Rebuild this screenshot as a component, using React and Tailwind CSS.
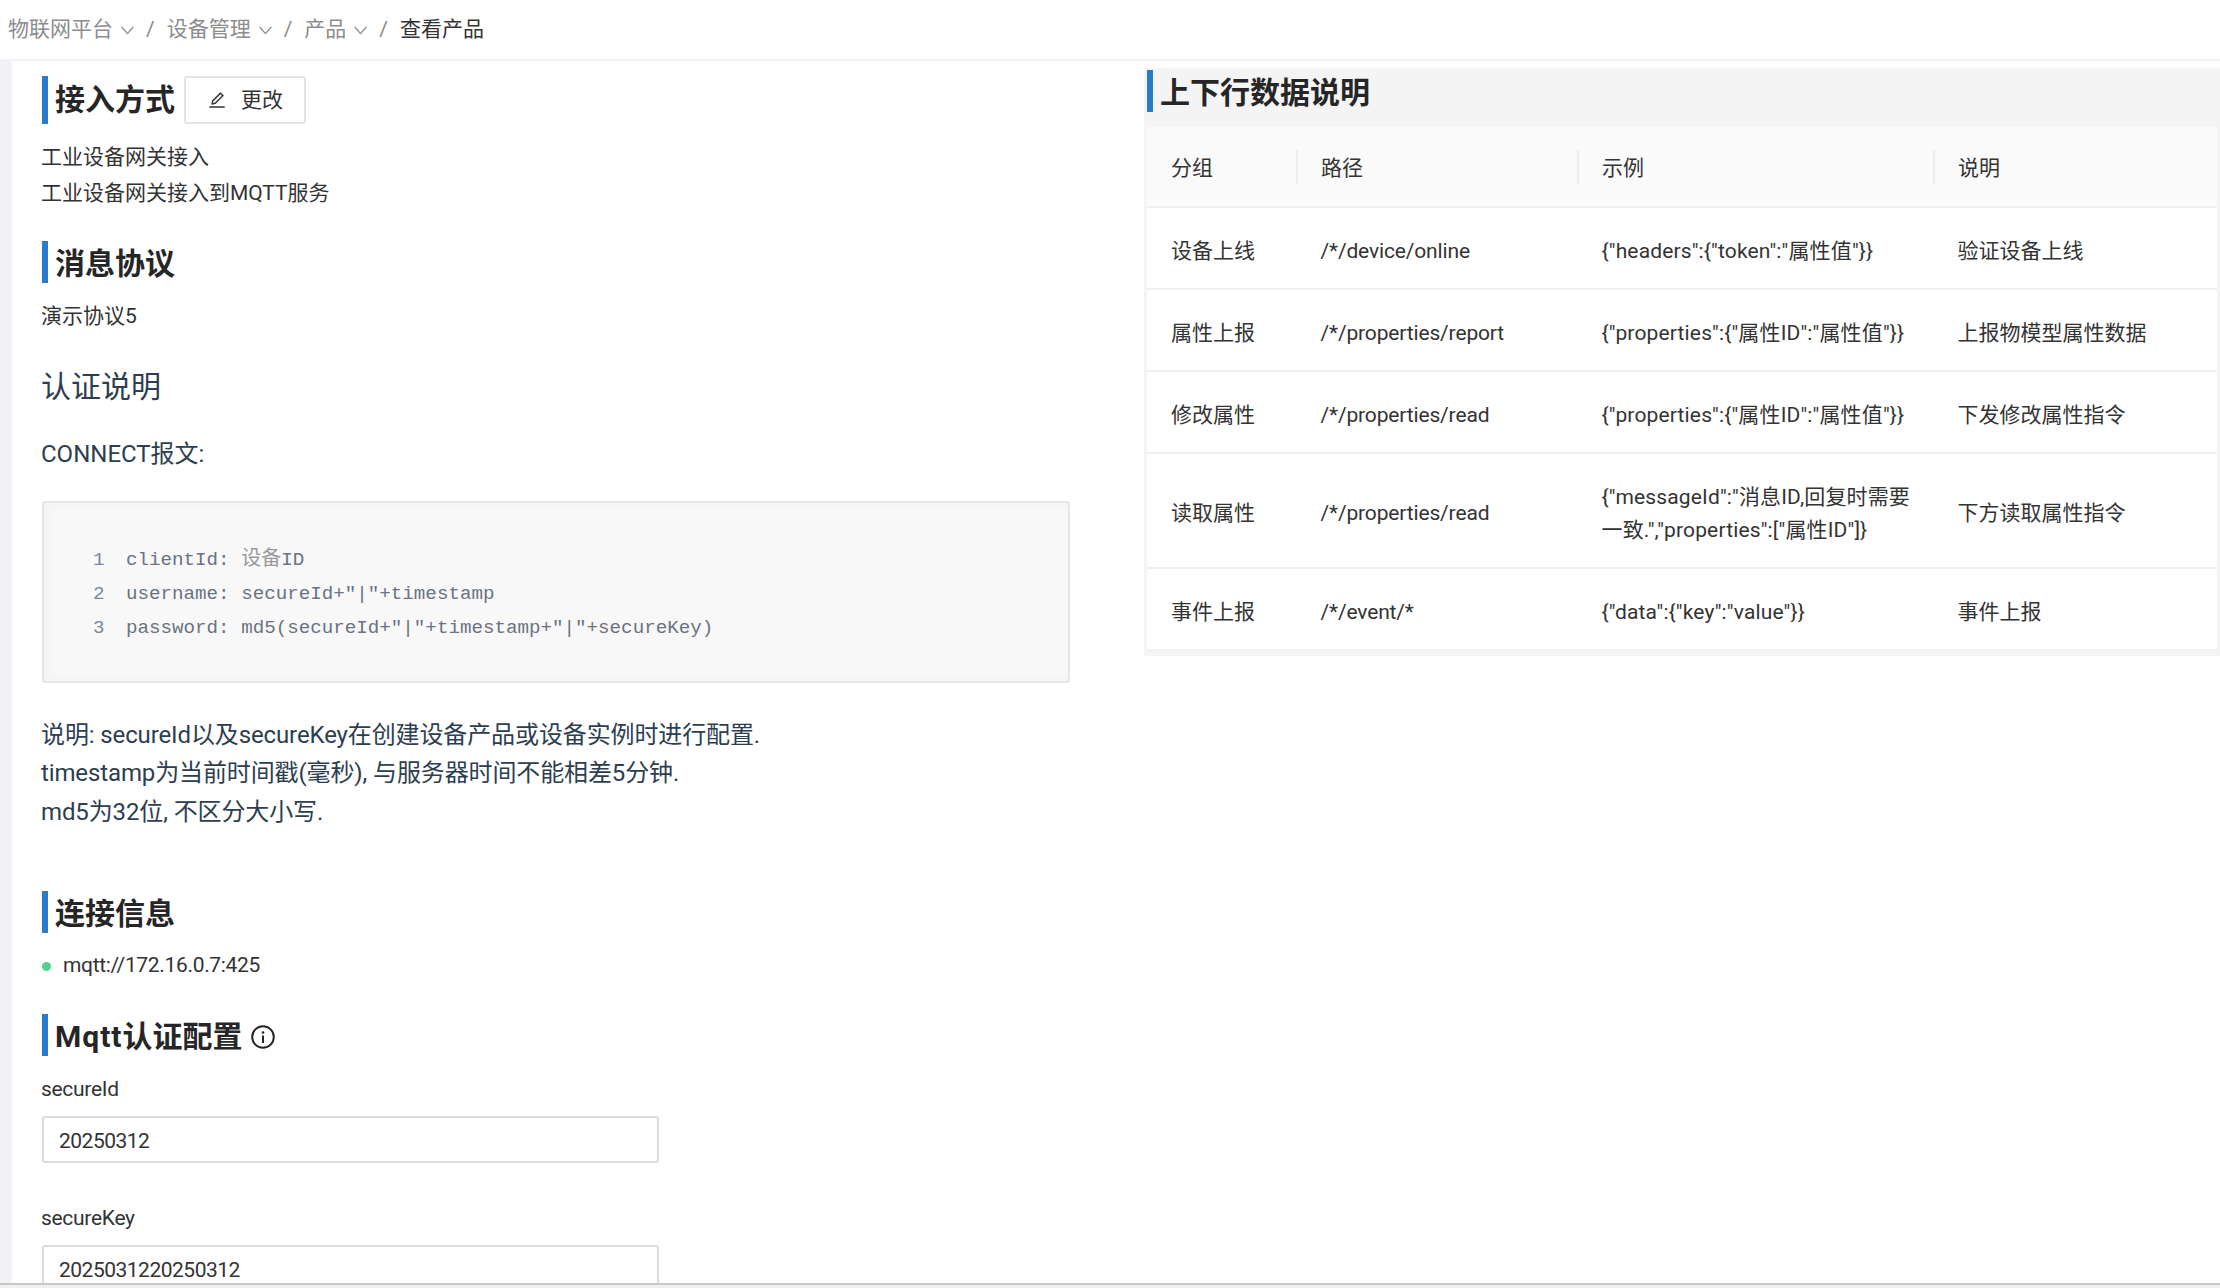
import React from "react";
import { AiOutlineEdit } from "react-icons/ai";

const FONT = "font-['Roboto','Noto_Sans_CJK_SC',sans-serif]";

function Chevron() {
  return (
    <svg width="13" height="9" viewBox="0 0 13 9" fill="none" className="ml-[8px] mt-[2px] shrink-0">
      <polyline points="0.7,1 6.5,7.6 12.3,1" stroke="#8c8c8c" strokeWidth="1.3" />
    </svg>
  );
}

function Crumb({ label }) {
  return (
    <div className="flex items-center">
      <span className="text-[#8c8c8c]">{label}</span>
      <Chevron />
    </div>
  );
}

function Sep() {
  return <span className="mx-[12px] text-[#8c8c8c]">/</span>;
}

function InfoIcon() {
  return (
    <svg width="24" height="24" viewBox="0 0 24 24" fill="none" className="ml-[8px] mt-[4px] shrink-0">
      <circle cx="12" cy="12" r="10.8" stroke="#262626" strokeWidth="2" />
      <rect x="11" y="10.5" width="2" height="7.5" fill="#262626" />
      <circle cx="12" cy="7.5" r="1.3" fill="#262626" />
    </svg>
  );
}

function SectionTitle({ children, h = "h-[42px]", pt = "pt-[3px]", className = "" }) {
  return (
    <div className={`flex items-center border-l-[6px] border-[#2b7bcb] pl-[7px] ${h} ${className}`}>
      <span className={`${pt} text-[30px] font-bold leading-none text-[#262626]`}>{children}</span>
    </div>
  );
}

const rows = [
  ["设备上线", "/*/device/online", ['{"headers":{"token":"属性值"}}'], "验证设备上线", "h-[82px]"],
  ["属性上报", "/*/properties/report", ['{"properties":{"属性ID":"属性值"}}'], "上报物模型属性数据", "h-[82px]"],
  ["修改属性", "/*/properties/read", ['{"properties":{"属性ID":"属性值"}}'], "下发修改属性指令", "h-[82px]"],
  ["读取属性", "/*/properties/read", ['{"messageId":"消息ID,回复时需要', '一致.","properties":["属性ID"]}'], "下方读取属性指令", "h-[115px]"],
  ["事件上报", "/*/event/*", ['{"data":{"key":"value"}}'], "事件上报", "h-[82px]"],
];

const COLS = "grid grid-cols-[149px_281px_356px_283px]";

function Field({ label, value, className = "" }) {
  return (
    <div className={className}>
      <div className="-ml-px text-[21px] leading-[28px] tracking-[-0.3px] text-[#333]">{label}</div>
      <div className="mt-[13px] flex h-[47px] w-[617px] items-center rounded-[3px] border-2 border-[#dcdcdc] pl-[15px] pt-[4px] text-[21px] tracking-[-0.5px] text-[#333]">
        {value}
      </div>
    </div>
  );
}

export default function App() {
  return (
    <div className={`${FONT} flex h-[1288px] w-[2220px] flex-col overflow-hidden bg-white text-[21px]`}>
      <div className="flex h-[59px] shrink-0 items-center pl-[8px] text-[21px]">
        <Crumb label="物联网平台" />
        <Sep />
        <Crumb label="设备管理" />
        <Sep />
        <Crumb label="产品" />
        <Sep />
        <span className="text-[#333]">查看产品</span>
      </div>
      <div className="flex min-h-0 flex-1 border-t-2 border-[#f0f2f5]">
        <div className="w-[12px] shrink-0 bg-[#f0f2f5]" />
        <div className="flex min-w-0 flex-1">
          <div className="w-[1058px] shrink-0 overflow-hidden pl-[30px] pt-[15px]">
            <div className="flex items-start">
              <SectionTitle h="h-[48px]" pt="pt-0">接入方式</SectionTitle>
              <div className="ml-[9px] flex h-[48px] w-[122px] items-center justify-center gap-[14px] rounded-[3px] border-2 border-[#e4e4e4] text-[21px] text-[#333]">
                <AiOutlineEdit className="text-[20px]" />
                <span className="pt-[2px]">更改</span>
              </div>
            </div>
            <div className="-ml-px mt-[15px] leading-[36px] text-[#333]">工业设备网关接入</div>
            <div className="-ml-px leading-[36px] text-[#333]">工业设备网关接入到MQTT服务</div>
            <SectionTitle className="mt-[30px]" pt="pt-[4px]">消息协议</SectionTitle>
            <div className="-ml-px mt-[17px] leading-[32px] text-[#333]">演示协议5</div>
            <div className="-ml-px mt-[32px] pt-[2px] text-[30px] leading-[42px] text-[#2c3e50]">认证说明</div>
            <div className="-ml-px mt-[27px] text-[24px] leading-[38px] text-[#2c3e50]">CONNECT报文:</div>
            <div className="mt-[28px] h-[182px] w-[1028px] rounded-[3px] border-2 border-[#e6e6e6] bg-[#f5f5f6] pb-0 pl-[8px] pt-[6px]">
              <div className="h-[166px] bg-[#f8f8f9] pl-[41px] pt-[34px] font-['Liberation_Mono','Noto_Sans_CJK_SC',monospace] text-[19.2px] leading-[34px] text-[#6b7280]">
                <div className="flex"><span className="w-[33px] text-[#7b8794]">1</span><span>clientId: <span className="text-[20px] text-[#9a9a9a]">设备</span>ID</span></div>
                <div className="flex"><span className="w-[33px] text-[#7b8794]">2</span><span>username: secureId+"|"+timestamp</span></div>
                <div className="flex"><span className="w-[33px] text-[#7b8794]">3</span><span>password: md5(secureId+"|"+timestamp+"|"+secureKey)</span></div>
              </div>
            </div>
            <div className="-ml-px mt-[33px] text-[24px] leading-[38.4px] tracking-[-0.12px] text-[#2c3e50]">
              <div>说明: secureId以及secureKey在创建设备产品或设备实例时进行配置.</div>
              <div>timestamp为当前时间戳(毫秒), 与服务器时间不能相差5分钟.</div>
              <div>md5为32位, 不区分大小写.</div>
            </div>
            <SectionTitle className="mt-[60px]">连接信息</SectionTitle>
            <div className="mt-[17px] flex h-[32px] items-center text-[#333]">
              <span className="h-[9px] w-[9px] rounded-full bg-[#52d18a]" />
              <span className="ml-[12px] tracking-[-0.33px]">mqtt://172.16.0.7:425</span>
            </div>
            <div className="mt-[32px] flex items-center">
              <SectionTitle><span className="tracking-[1px]">Mqtt</span>认证配置</SectionTitle>
              <InfoIcon />
            </div>
            <Field label="secureId" value="20250312" className="mt-[19px]" />
            <Field label="secureKey" value="2025031220250312" className="mt-[41px]" />
          </div>
          <div className="ml-[74px] h-[588px] w-[1076px] shrink-0 mt-[7px] bg-[#f4f4f4] pl-[3px] pr-[3px]">
            <div className="flex h-[59px] pt-[2px]">
              <SectionTitle className="w-full">上下行数据说明</SectionTitle>
            </div>
            <div className={`${COLS} h-[81px] items-center border-b-2 border-[#f0f0f0] bg-[#fafafa] text-[#333]`}>
              {["分组", "路径", "示例", "说明"].map((t, i) => (
                <div key={t} className={`flex h-[34px] items-center ${i ? "border-l-2 border-[#eeeeee] pl-[23px]" : "pl-[24px]"}`}>
                  <span className="pt-[5px]">{t}</span>
                </div>
              ))}
            </div>
            {rows.map((r, i) => (
              <div key={i} className={`${COLS} ${r[4]} items-center border-b-2 border-[#f0f0f0] bg-white pt-[7px] text-[#333]`}>
                <div className="pl-[24px]">{r[0]}</div>
                <div className="pl-[24.5px] tracking-[-0.15px]">{r[1]}</div>
                <div className="pl-[24.5px] leading-[33px] tracking-[0.15px]">{r[2].map((l) => <div key={l} className="whitespace-nowrap">{l}</div>)}</div>
                <div className="pl-[24.5px]">{r[3]}</div>
              </div>
            ))}
          </div>
        </div>
      </div>
      <div className="h-[5px] shrink-0 border-t-2 border-[#c8c8c8] bg-[#f0f0f0]" />
    </div>
  );
}
